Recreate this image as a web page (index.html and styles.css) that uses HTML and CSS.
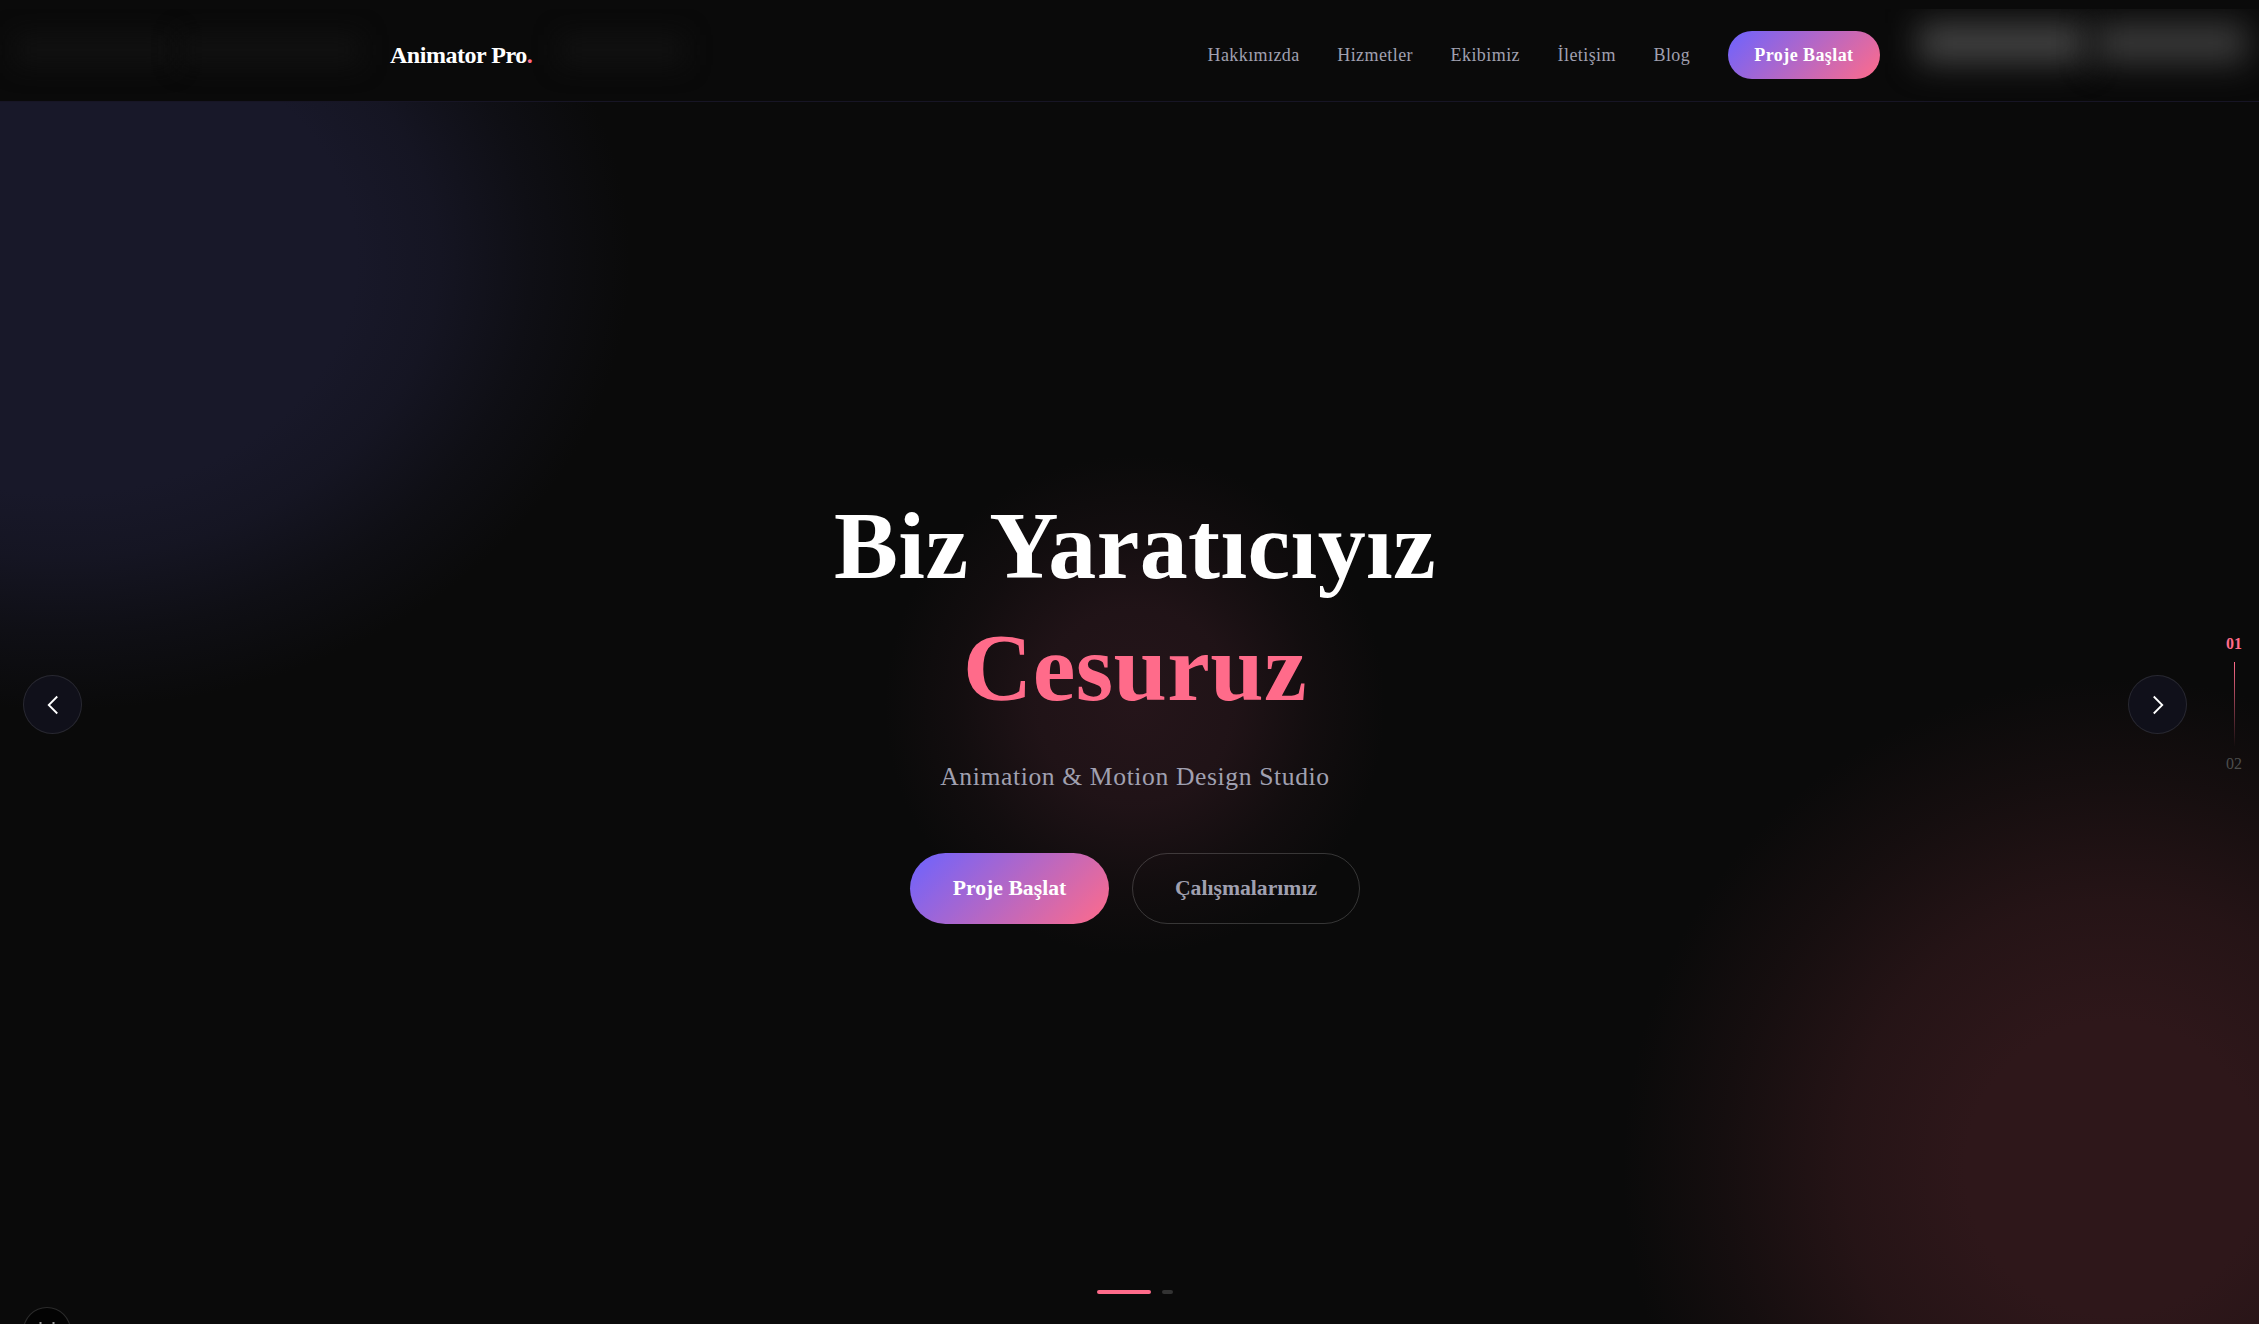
FILE: index.html
```html
<!DOCTYPE html>
<html lang="tr">
<head>
<meta charset="utf-8">
<title>Animator Pro</title>
<link rel="stylesheet" href="styles.css">
</head>
<body>
<div class="page">
  <div class="glow glow-purple"></div>
  <div class="glow glow-red"></div>
  <div class="glow glow-center"></div>
  <header class="nav">
    <a class="logo" href="#">Animator Pro<span class="dot">.</span></a>
    <nav class="links">
      <a href="#">Hakkımızda</a>
      <a href="#">Hizmetler</a>
      <a href="#">Ekibimiz</a>
      <a href="#">İletişim</a>
      <a href="#">Blog</a>
      <a class="nav-cta" href="#">Proje Başlat</a>
    </nav>
  </header>
  <div class="haze haze-left">
    <span class="blob faint b1"></span>
    <span class="blob faint b2"></span>
    <span class="blob faint b3"></span>
  </div>
  <div class="haze haze-right">
    <span class="blob b4"></span>
    <span class="blob b5"></span>
  </div>
  <main class="hero">
    <h1 class="title">Biz Yaratıcıyız</h1>
    <h2 class="title accent">Cesuruz</h2>
    <p class="sub">Animation &amp; Motion Design Studio</p>
    <div class="actions">
      <a class="btn btn-primary" href="#">Proje Başlat</a>
      <a class="btn btn-ghost" href="#">Çalışmalarımız</a>
    </div>
  </main>
  <button class="arrow arrow-prev" aria-label="Önceki"><svg viewBox="0 0 24 24" width="34" height="34"><path d="M15 18l-6-6 6-6"/></svg></button>
  <button class="arrow arrow-next" aria-label="Sonraki"><svg viewBox="0 0 24 24" width="34" height="34"><path d="M9 18l6-6-6-6"/></svg></button>
  <div class="counter">
    <span class="num active">01</span>
    <span class="line"></span>
    <span class="num">02</span>
  </div>
  <div class="dots"><span class="bar on"></span><span class="bar"></span></div>
  <button class="corner" aria-label="Duraklat"><svg viewBox="0 0 24 24" width="24" height="24"><path d="M5.5 3v18M18.5 3v18"/></svg></button>
</div>
</body>
</html>
```
FILE: styles.css
```css
* { box-sizing: border-box; margin: 0; padding: 0; }
html, body { height: 100%; overflow: hidden; background: #0a0a0a; }
body { font-family: "Liberation Serif", serif; color: #fff; }
a { color: inherit; text-decoration: none; }
.page { position: relative; width: 100%; height: 100vh; overflow: hidden; display: flex; flex-direction: column; background: #0a0a0a; }

.glow { position: absolute; border-radius: 50%; pointer-events: none; }
.glow-purple { left: -510px; top: -190px; width: 1140px; height: 900px; background: radial-gradient(closest-side, #181829 0%, #181829 52%, rgba(24,24,41,.8) 66%, rgba(24,24,41,.35) 83%, rgba(24,24,41,0) 100%); }
.glow-red { right: -344px; bottom: -334px; width: 980px; height: 980px; background: radial-gradient(closest-side, #2e171a 0%, #2e171a 30%, rgba(46,23,26,.75) 55%, rgba(46,23,26,.3) 80%, rgba(46,23,26,0) 100%); }
.glow-center { left: 885px; top: 455px; width: 500px; height: 500px; background: radial-gradient(closest-side, #25151a 0%, rgba(37,21,26,.8) 40%, rgba(37,21,26,.3) 72%, rgba(37,21,26,0) 100%); }

.nav { position: relative; z-index: 2; height: 102px; flex: none; display: flex; align-items: center; justify-content: space-between; padding: 9px 379px 0 390px; background: #0a0a0a; border-bottom: 1px solid rgba(124,108,240,.12); }
.logo { font-size: 24px; font-weight: 700; letter-spacing: -.48px; }
.dot { color: #ff6b8a; }
.links { display: flex; align-items: center; gap: 37.6px; font-size: 18px; letter-spacing: .42px; color: #a0a0b0; }
.nav-cta { display: flex; align-items: center; height: 48px; padding: 0 26.5px; border-radius: 24px; color: #fff; font-weight: 700; background: linear-gradient(135deg, #6c63ff, #ff6b8a); }

.haze { position: absolute; z-index: 3; top: 9px; height: 92px; overflow: hidden; pointer-events: none; }
.haze-left { left: 0; width: 720px; }
.haze-right { left: 1885px; right: 0; }
.blob { position: absolute; display: block; top: 14px; height: 40px; filter: blur(16px); }
.blob.faint { top: 26px; height: 30px; background: #111; filter: blur(12px); }
.b1 { left: 15px; width: 158px; }
.b2 { left: 180px; width: 180px; }
.b3 { left: 560px; width: 124px; }
.b4 { left: 33px; width: 168px; background: #434343; }
.b5 { left: 210px; width: 152px; background: #3a3a3a; }

.hero { position: relative; z-index: 1; flex: 1; display: flex; flex-direction: column; align-items: center; padding: 383px 0 0 11px; text-align: center; }
.title { font-size: 96px; font-weight: 700; line-height: 122px; letter-spacing: .4px; color: #fff; }
.accent { color: #ff6b8a; }
.sub { margin-top: 32.5px; font-size: 25.6px; color: #a0a0b0; letter-spacing: .62px; }
.actions { margin-top: 61px; display: flex; gap: 23px; }
.btn { display: flex; align-items: center; justify-content: center; height: 71px; border-radius: 36px; font-size: 21.7px; font-weight: 700; }
.btn-primary { width: 199px; background: linear-gradient(135deg, #6c63ff, #ff6b8a); color: #fff; }
.btn-ghost { width: 228px; border: 1px solid rgba(255,255,255,.18); color: #a0a0b0; }

.arrow { position: absolute; z-index: 2; top: 675px; width: 59px; height: 59px; border-radius: 50%; border: 1px solid rgba(255,255,255,.1); background: #10101a; display: flex; align-items: center; justify-content: center; }
.arrow svg, .corner svg { fill: none; stroke: #fff; stroke-width: 1.3; }
.arrow-prev { left: 23px; }
.arrow-next { left: 2128px; }

.counter { position: absolute; z-index: 2; right: 17px; top: 635px; display: flex; flex-direction: column; align-items: center; gap: 8.5px; font-size: 16px; }
.num { color: #4d4d4d; line-height: 18px; }
.num.active { color: #ff6b8a; font-weight: 700; }
.line { width: 1px; height: 85px; background: linear-gradient(#ff6b8a, rgba(255,107,138,0)); }

.dots { position: absolute; z-index: 2; left: 1097px; top: 1290px; display: flex; gap: 11px; }
.bar { display: block; width: 11px; height: 4px; border-radius: 2px; background: #333; }
.bar.on { width: 54px; background: #ff6b8a; }

.corner { position: absolute; z-index: 2; left: 23px; top: 1307px; width: 48px; height: 48px; border-radius: 50%; border: 1px solid rgba(255,255,255,.16); background: #030303; display: flex; align-items: center; justify-content: center; }
.corner svg { stroke: #999; stroke-width: 2; }
```
